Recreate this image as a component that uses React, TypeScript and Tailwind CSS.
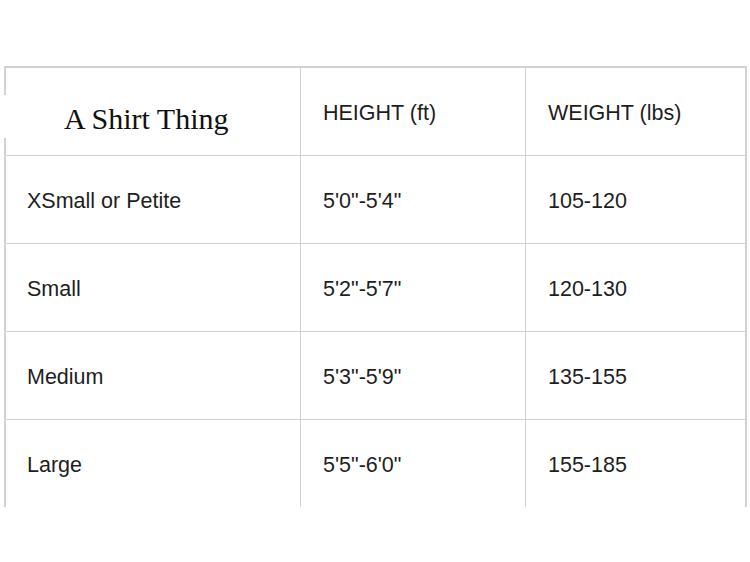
import React from "react";

const rows = [
  ["XSmall or Petite", "5'0\"-5'4\"", "105-120"],
  ["Small", "5'2\"-5'7\"", "120-130"],
  ["Medium", "5'3\"-5'9\"", "135-155"],
  ["Large", "5'5\"-6'0\"", "155-185"],
];

export default function App() {
  return (
    <div className="w-[750px] h-[562px] bg-white overflow-hidden" style={{ fontFamily: '"Liberation Sans", Arial, sans-serif' }}>
      <div className="pt-[66px] pl-[4px]">
        <div className="w-[743px] border-t-2 border-l-2 border-r-2 border-[#d2d2d2] text-[#1e1e1e] text-[21.5px]">
          {/* header */}
          <div className="grid grid-cols-[294px_225px_220px] h-[87px]">
            <div className="relative flex items-center pl-[58px] pt-[13px]">
              <div className="absolute left-[-2px] top-[27px] w-[140px] h-[43px] bg-white" />
              <span className="relative text-[30px] text-[#111]" style={{ fontFamily: '"Liberation Serif", "Times New Roman", serif' }}>
                A Shirt Thing
              </span>
            </div>
            <div className="flex items-center pl-[22px] pt-[3px] border-l border-[#d2d2d2]">HEIGHT (ft)</div>
            <div className="flex items-center pl-[22px] pt-[3px] border-l border-[#d2d2d2]">WEIGHT (lbs)</div>
          </div>
          {rows.map((r, i) => (
            <div key={i} className="grid grid-cols-[294px_225px_220px] h-[88px] border-t border-[#d2d2d2]">
              <div className="flex items-center pl-[21px] pt-[3px]">{r[0]}</div>
              <div className="flex items-center pl-[22px] pt-[3px] border-l border-[#d2d2d2]">{r[1]}</div>
              <div className="flex items-center pl-[22px] pt-[3px] border-l border-[#d2d2d2]">{r[2]}</div>
            </div>
          ))}
        </div>
      </div>
    </div>
  );
}
